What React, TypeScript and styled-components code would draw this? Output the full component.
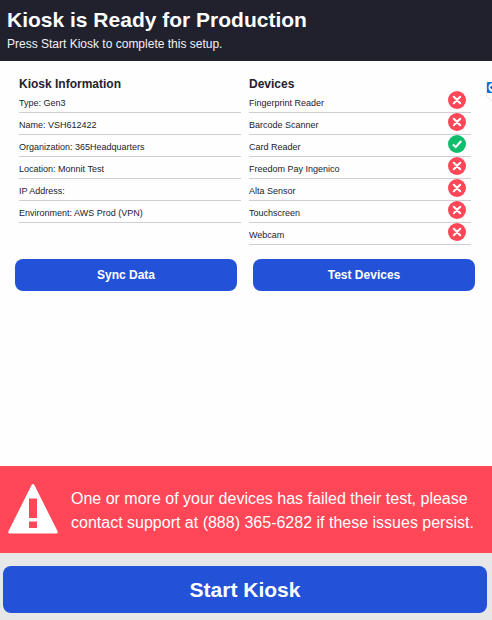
import React from "react";
import styled, { createGlobalStyle } from "styled-components";

const GlobalStyle = createGlobalStyle`
  *, *::before, *::after { box-sizing: border-box; }
  body {
    margin: 0;
    background: #fefefe;
    color: #22222e;
    font-family: "Liberation Sans", Arial, sans-serif;
  }
  h1, h2, p, ul { margin: 0; padding: 0; }
`;

const Page = styled.div`
  position: relative;
  display: flex;
  flex-direction: column;
  min-height: 100vh;
  overflow-x: hidden;
`;

const Header = styled.header`
  padding: 7px 7px 9px;
  background: #21212d;
  color: #ffffff;
`;

const Title = styled.h1`
  font-size: 21px;
  line-height: 26px;
`;

const Subtitle = styled.p`
  padding-top: 3px;
  font-size: 12px;
  line-height: 16px;
  color: #f1f1f4;
`;

const Main = styled.main`
  flex: 1;
  padding-top: 16px;
`;

const Columns = styled.div`
  display: grid;
  grid-template-columns: 1fr 1fr;
  gap: 8px;
  padding: 0 21px 0 19px;
`;

const SectionTitle = styled.h2`
  font-size: 12px;
  line-height: 14px;
`;

const List = styled.ul`
  list-style: none;
`;

const Row = styled.li`
  display: flex;
  align-items: center;
  justify-content: space-between;
  height: 22px;
  padding: 0 5px 3px 0;
  border-bottom: 1px solid #cfcfd4;
  font-size: 9px;
  line-height: 12px;
  white-space: nowrap;
`;

const RowLabel = styled.span`
  padding-top: 6px;
`;

const StatusIcon = styled.svg`
  display: block;
  width: 18px;
  height: 18px;
`;

const Actions = styled.div`
  display: grid;
  grid-template-columns: 1fr 1fr;
  gap: 16px;
  padding: 14px 17px 16px 15px;
`;

const Button = styled.button<{ $large?: boolean }>`
  width: 100%;
  height: ${(p) => (p.$large ? 47 : 32)}px;
  padding: 0;
  border: 0;
  border-radius: 8px;
  background: #2352d8;
  color: #ffffff;
  font-family: inherit;
  font-size: ${(p) => (p.$large ? 21 : 12)}px;
  font-weight: 700;
  cursor: pointer;
`;

const Alert = styled.div`
  display: flex;
  align-items: center;
  gap: 13px;
  padding: 17px 8px 18px;
  background: #ff4757;
  color: #ffffff;
`;

const WarningIcon = styled.svg`
  flex: none;
  width: 50px;
  height: 50px;
`;

const AlertText = styled.p`
  padding: 4px 0 0;
  font-size: 16px;
  line-height: 24px;
`;

const Footer = styled.footer`
  padding: 13px 5px 7px 3px;
  background: #e7e7e7;
`;

const RemoteTab = styled.svg`
  position: absolute;
  top: 81px;
  right: 0;
  width: 6px;
  height: 22px;
`;

const details = [
  "Type: Gen3",
  "Name: VSH612422",
  "Organization: 365Headquarters",
  "Location: Monnit Test",
  "IP Address:",
  "Environment: AWS Prod (VPN)",
];

const devices = [
  { name: "Fingerprint Reader", ok: false },
  { name: "Barcode Scanner", ok: false },
  { name: "Card Reader", ok: true },
  { name: "Freedom Pay Ingenico", ok: false },
  { name: "Alta Sensor", ok: false },
  { name: "Touchscreen", ok: false },
  { name: "Webcam", ok: false },
];

function Status({ ok }: { ok: boolean }) {
  return (
    <StatusIcon viewBox="0 0 18 18" role="img" aria-label={ok ? "Passed" : "Failed"}>
      <circle cx="9" cy="9" r="9" fill={ok ? "#0fbe6c" : "#ff4757"} />
      <path
        d={ok ? "M4.9 9.4 7.7 12.1 13.2 6" : "M5.8 5.8 12.2 12.2M12.2 5.8 5.8 12.2"}
        fill="none"
        stroke="#ffffff"
        strokeWidth="2.1"
        strokeLinecap={ok ? "butt" : "round"}
      />
    </StatusIcon>
  );
}

export default function App() {
  return (
    <>
      <GlobalStyle />
      <Page>
        <Header>
          <Title>Kiosk is Ready for Production</Title>
          <Subtitle>Press Start Kiosk to complete this setup.</Subtitle>
        </Header>
        <Main>
          <Columns>
            <section>
              <SectionTitle>Kiosk Information</SectionTitle>
              <List>
                {details.map((text) => (
                  <Row key={text}>
                    <RowLabel>{text}</RowLabel>
                  </Row>
                ))}
              </List>
            </section>
            <section>
              <SectionTitle>Devices</SectionTitle>
              <List>
                {devices.map((device) => (
                  <Row key={device.name}>
                    <RowLabel>{device.name}</RowLabel>
                    <Status ok={device.ok} />
                  </Row>
                ))}
              </List>
            </section>
          </Columns>
          <Actions>
            <Button type="button">Sync Data</Button>
            <Button type="button">Test Devices</Button>
          </Actions>
        </Main>
        <Alert role="alert">
          <WarningIcon viewBox="0 0 50 50" aria-hidden="true">
            <path
              d="M23.6 1Q25-1 26.4 1L49.7 47.600Q50.200 49.500 48.500 49.500H1.500Q-.2 49.500.3 47.600ZM21 14.500V34H29V14.500ZM21 37.500V44H29V37.500Z"
              fill="#ffffff"
              fillRule="evenodd"
            />
          </WarningIcon>
          <AlertText>
            One or more of your devices has failed their test, please contact support at (888)
            365-6282 if these issues persist.
          </AlertText>
        </Alert>
        <Footer>
          <Button type="button" $large>
            Start Kiosk
          </Button>
        </Footer>
        <RemoteTab viewBox="0 0 6 22" aria-hidden="true">
          <path d="M.5 0V15L6 20" fill="none" stroke="#e6e6e8" />
          <rect x="1" y="1" width="6" height="11" rx="1" fill="#0b6fd8" />
          <circle cx="7" cy="6.500" r="4.500" fill="#ffffff" />
          <path d="M3.500 6.500 6 4.500V8.500Z" fill="#0b6fd8" />
        </RemoteTab>
      </Page>
    </>
  );
}
